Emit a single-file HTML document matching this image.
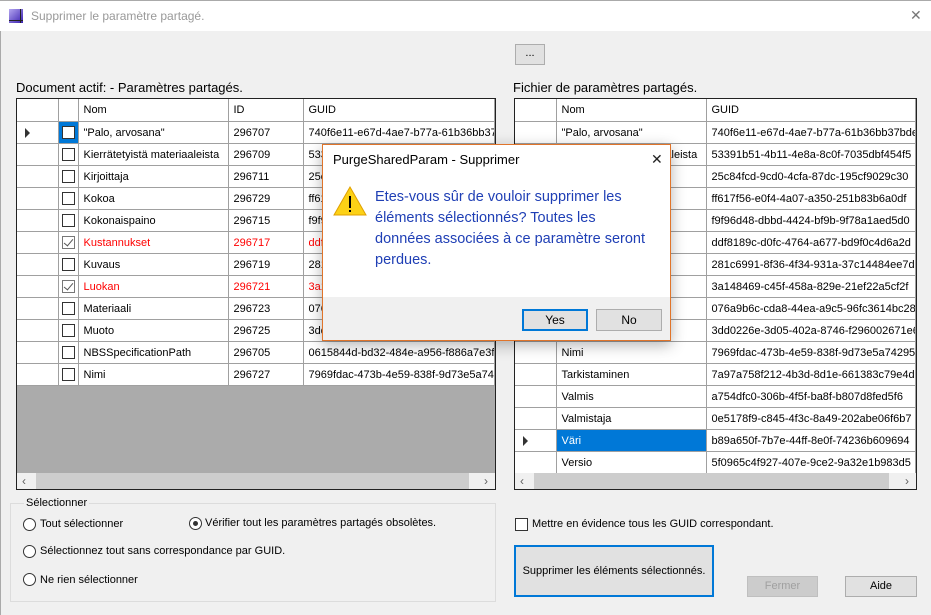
<!DOCTYPE html>
<html><head><meta charset="utf-8"><style>
*{box-sizing:border-box;margin:0;padding:0}
body{width:931px;height:615px;overflow:hidden;background:#f0f0f0;font-family:"Liberation Sans",sans-serif;font-size:11px;color:#000;position:relative}
.a{position:absolute;white-space:nowrap}
.title{left:0;top:0;width:931px;height:31px;background:#fff;border-top:1px solid #aaa}
.grid{border:1px solid #222;background:#ababab;overflow:hidden}
table{border-collapse:collapse;table-layout:fixed;background:#fff}
td{border:1px solid #a0a0a0;height:22px;padding:1px 0 0 5px;white-space:nowrap;overflow:hidden;font-size:11px;line-height:20px;text-overflow:clip}
tr:first-child td{border-top:none}
td:first-child{border-left:none}
.red td{color:#f00}
.cb{display:inline-block;width:13px;height:13px;border:1px solid #333;background:#fff;vertical-align:middle;position:relative}
.chk{border-color:#777}
.chk::after{content:"";position:absolute;left:3px;top:0px;width:4px;height:8px;border:solid #555;border-width:0 1px 1px 0;transform:rotate(40deg)}
.sb{height:16px;background:#f0f0f0}
.thumb{background:#cdcdcd;height:16px}
.arr{font-size:12px;color:#606060;top:1px}
.btn{background:#e1e1e1;border:1px solid #adadad;text-align:center}
.radio{width:13px;height:13px;border:1px solid #333;border-radius:50%;background:#fff}
.tri{width:0;height:0;border-left:5px solid #333;border-top:5px solid transparent;border-bottom:5px solid transparent}
</style></head><body>
<div class="a title"></div>
<div class="a" style="left:0;top:31px;width:1px;height:584px;background:#aaa"></div>
<div class="a" style="left:9px;top:9px;width:14px;height:14px;background:linear-gradient(135deg,#b4a6f0,#3a1fb0)"></div>
<div class="a" style="left:9px;top:20px;width:14px;height:1px;background:#222"></div>
<div class="a" style="left:20px;top:9px;width:1px;height:14px;background:#222"></div>
<div class="a" style="left:31px;top:9px;color:#999;font-size:12px">Supprimer le paramètre partagé.</div>
<div class="a" style="left:910px;top:7px;color:#777;font-size:14px">✕</div>

<div class="a btn" style="left:515px;top:44px;width:30px;height:21px;line-height:17px">...</div>

<div class="a" style="left:16px;top:80px;font-size:13px">Document actif: - Paramètres partagés.</div>
<div class="a" style="left:513px;top:80px;font-size:13px">Fichier de paramètres partagés.</div>

<div class="a grid" style="left:16px;top:98px;width:480px;height:392px">
<table style="width:478px">
<colgroup><col style="width:41px"><col style="width:20px"><col style="width:150px"><col style="width:75px"><col></colgroup>
<tr><td></td><td></td><td>Nom</td><td>ID</td><td>GUID</td></tr>
<tr><td style="position:relative"><div class="a tri" style="left:8px;top:6px"></div></td><td style="background:#0078d7;padding-left:3px"><span class="cb"></span></td><td>"Palo, arvosana"</td><td>296707</td><td>740f6e11-e67d-4ae7-b77a-61b36bb37...</td></tr>
<tr><td></td><td style="padding-left:3px"><span class="cb"></span></td><td>Kierrätetyistä materiaaleista</td><td>296709</td><td>53391b51-4b11-4e8a-8c0f-7035dbf454f5</td></tr>
<tr><td></td><td style="padding-left:3px"><span class="cb"></span></td><td>Kirjoittaja</td><td>296711</td><td>25c84fcd-9cd0-4cfa-87dc-195cf9029c30</td></tr>
<tr><td></td><td style="padding-left:3px"><span class="cb"></span></td><td>Kokoa</td><td>296729</td><td>ff617f56-e0f4-4a07-a350-251b83b6a0df</td></tr>
<tr><td></td><td style="padding-left:3px"><span class="cb"></span></td><td>Kokonaispaino</td><td>296715</td><td>f9f96d48-dbbd-4424-bf9b-9f78a1aed5d0</td></tr>
<tr class="red"><td></td><td style="padding-left:3px"><span class="cb chk"></span></td><td>Kustannukset</td><td>296717</td><td>ddf8189c-d0fc-4764-a677-bd9f0c4d6a2d</td></tr>
<tr><td></td><td style="padding-left:3px"><span class="cb"></span></td><td>Kuvaus</td><td>296719</td><td>281c6991-8f36-4f34-931a-37c14484ee7d</td></tr>
<tr class="red"><td></td><td style="padding-left:3px"><span class="cb chk"></span></td><td>Luokan</td><td>296721</td><td>3a148469-c45f-458a-829e-21ef22a5cf2f</td></tr>
<tr><td></td><td style="padding-left:3px"><span class="cb"></span></td><td>Materiaali</td><td>296723</td><td>076a9b6c-cda8-44ea-a9c5-96fc3614bc28</td></tr>
<tr><td></td><td style="padding-left:3px"><span class="cb"></span></td><td>Muoto</td><td>296725</td><td>3dd0226e-3d05-402a-8746-f296002671e6</td></tr>
<tr><td></td><td style="padding-left:3px"><span class="cb"></span></td><td>NBSSpecificationPath</td><td>296705</td><td>0615844d-bd32-484e-a956-f886a7e3f...</td></tr>
<tr><td></td><td style="padding-left:3px"><span class="cb"></span></td><td>Nimi</td><td>296727</td><td>7969fdac-473b-4e59-838f-9d73e5a74...</td></tr>
</table>
<div class="a sb" style="left:0;top:374px;width:478px"><div class="a thumb" style="left:19px;width:433px"></div><div class="a arr" style="left:5px">&lsaquo;</div><div class="a arr" style="left:467px">&rsaquo;</div></div>
</div>

<div class="a grid" style="left:514px;top:98px;width:403px;height:392px">
<table style="width:401px">
<colgroup><col style="width:41px"><col style="width:150px"><col></colgroup>
<tr><td></td><td>Nom</td><td>GUID</td></tr>
<tr><td></td><td>"Palo, arvosana"</td><td>740f6e11-e67d-4ae7-b77a-61b36bb37bde</td></tr>
<tr><td></td><td>Kierrätetyistä materiaaleista</td><td>53391b51-4b11-4e8a-8c0f-7035dbf454f5</td></tr>
<tr><td></td><td>Kirjoittaja</td><td>25c84fcd-9cd0-4cfa-87dc-195cf9029c30</td></tr>
<tr><td></td><td>Kokoa</td><td>ff617f56-e0f4-4a07-a350-251b83b6a0df</td></tr>
<tr><td></td><td>Kokonaispaino</td><td>f9f96d48-dbbd-4424-bf9b-9f78a1aed5d0</td></tr>
<tr><td></td><td>Kustannukset</td><td>ddf8189c-d0fc-4764-a677-bd9f0c4d6a2d</td></tr>
<tr><td></td><td>Kuvaus</td><td>281c6991-8f36-4f34-931a-37c14484ee7d</td></tr>
<tr><td></td><td>Luokan</td><td>3a148469-c45f-458a-829e-21ef22a5cf2f</td></tr>
<tr><td></td><td>Materiaali</td><td>076a9b6c-cda8-44ea-a9c5-96fc3614bc28</td></tr>
<tr><td></td><td>Muoto</td><td>3dd0226e-3d05-402a-8746-f296002671e6</td></tr>
<tr><td></td><td>Nimi</td><td>7969fdac-473b-4e59-838f-9d73e5a74295</td></tr>
<tr><td></td><td>Tarkistaminen</td><td>7a97a758f212-4b3d-8d1e-661383c79e4d</td></tr>
<tr><td></td><td>Valmis</td><td>a754dfc0-306b-4f5f-ba8f-b807d8fed5f6</td></tr>
<tr><td></td><td>Valmistaja</td><td>0e5178f9-c845-4f3c-8a49-202abe06f6b7</td></tr>
<tr><td style="position:relative"><div class="a tri" style="left:8px;top:6px"></div></td><td style="background:#0078d7;color:#fff">Väri</td><td>b89a650f-7b7e-44ff-8e0f-74236b609694</td></tr>
<tr><td></td><td>Versio</td><td>5f0965c4f927-407e-9ce2-9a32e1b983d5</td></tr>
</table>
<div class="a sb" style="left:0;top:374px;width:401px"><div class="a thumb" style="left:19px;width:355px"></div><div class="a arr" style="left:5px">&lsaquo;</div><div class="a arr" style="left:390px">&rsaquo;</div></div>
</div>

<div class="a" style="left:10px;top:503px;width:486px;height:99px;border:1px solid #dcdcdc"></div>
<div class="a" style="left:24px;top:497px;background:#f0f0f0;padding:0 2px">Sélectionner</div>
<div class="a radio" style="left:23px;top:518px"></div><div class="a" style="left:40px;top:518px">Tout sélectionner</div>
<div class="a radio" style="left:189px;top:517px"><div class="a" style="left:3px;top:3px;width:5px;height:5px;border-radius:50%;background:#333"></div></div><div class="a" style="left:205px;top:517px">Vérifier tout les paramètres partagés obsolètes.</div>
<div class="a radio" style="left:23px;top:545px"></div><div class="a" style="left:40px;top:545px">Sélectionnez tout sans correspondance par GUID.</div>
<div class="a radio" style="left:23px;top:573px"></div><div class="a" style="left:40px;top:574px">Ne rien sélectionner</div>

<div class="a cb" style="left:515px;top:518px"></div><div class="a" style="left:532px;top:518px">Mettre en évidence tous les GUID correspondant.</div>
<div class="a btn" style="left:514px;top:545px;width:200px;height:52px;border:2px solid #0078d7;line-height:48px;white-space:nowrap">Supprimer les éléments sélectionnés.</div>
<div class="a btn" style="left:747px;top:576px;width:71px;height:21px;line-height:19px;color:#a0a0a0;background:#ccc;border-color:#bfbfbf">Fermer</div>
<div class="a btn" style="left:845px;top:576px;width:72px;height:21px;line-height:19px">Aide</div>

<div class="a" style="left:322px;top:144px;width:349px;height:197px;background:#fff;border:1px solid #e0742a;box-shadow:0 4px 14px rgba(0,0,0,.3);white-space:normal">
<div class="a" style="left:10px;top:7px;font-size:13px">PurgeSharedParam - Supprimer</div>
<div class="a" style="left:328px;top:6px;font-size:14px;color:#222">✕</div>
<svg class="a" style="left:10px;top:40px" width="34" height="32"><polygon points="17,2 33,30 1,30" fill="#fcd116" stroke="#e0a000"/><rect x="16" y="11" width="2" height="12" fill="#000"/><rect x="16" y="25" width="2" height="2" fill="#000"/></svg>
<div class="a" style="left:52px;top:42px;width:275px;font-size:14.5px;line-height:21px;color:#1f3fb5;white-space:normal">Etes-vous sûr de vouloir supprimer les éléments sélectionnés? Toutes les données associées à ce paramètre seront perdues.</div>
<div class="a" style="left:0;top:152px;width:347px;height:43px;background:#f0f0f0"></div>
<div class="a btn" style="left:199px;top:164px;width:66px;height:22px;border:2px solid #0078d7;line-height:18px;font-size:12px">Yes</div>
<div class="a btn" style="left:273px;top:164px;width:66px;height:22px;line-height:20px;font-size:12px">No</div>
</div>
</body></html>
